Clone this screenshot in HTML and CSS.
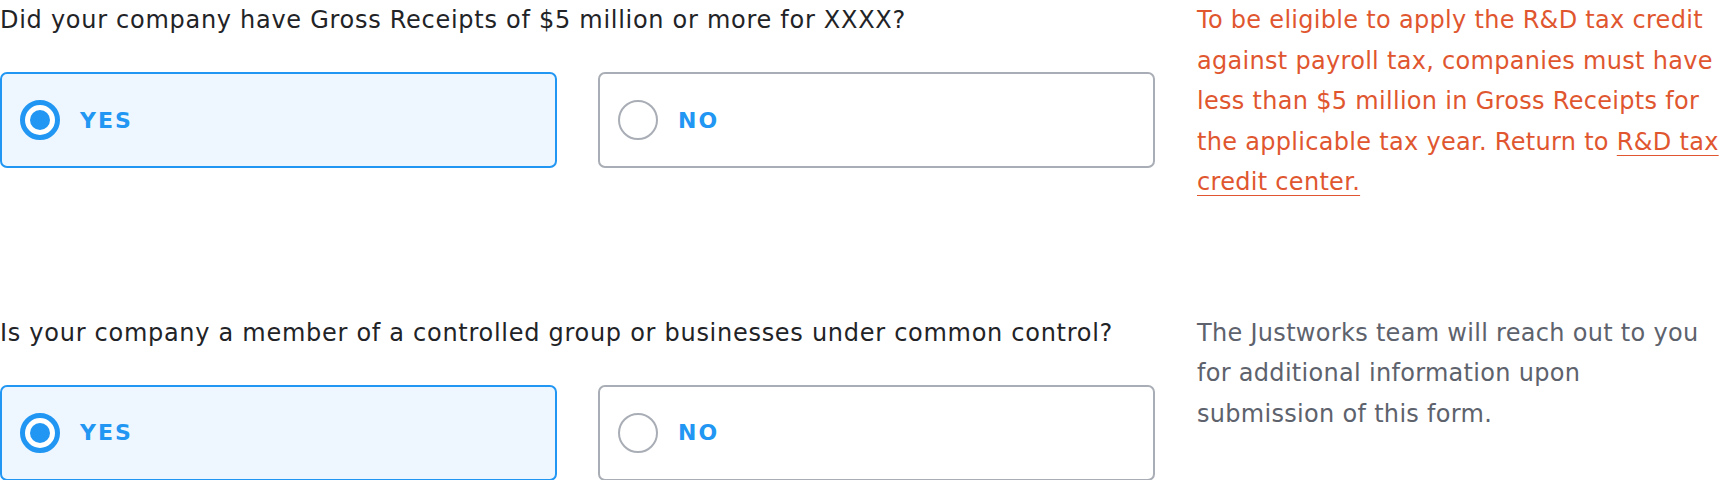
FILE: index.html
```html
<!DOCTYPE html>
<html lang="en">
<head>
<meta charset="utf-8">
<title>Gross Receipts</title>
<link rel="stylesheet" href="styles.css">
</head>
<body>
<div class="page">
  <section class="row">
    <div class="question">
      <p class="label">Did your company have Gross Receipts of $5 million or more for XXXX?</p>
      <div class="options">
        <label class="option selected"><span class="radio"></span><span class="opt-text">Yes</span></label>
        <label class="option"><span class="radio"></span><span class="opt-text">No</span></label>
      </div>
    </div>
    <p class="note warn">To be eligible to apply the R&amp;D tax credit<br>against payroll tax, companies must have<br>less than $5 million in Gross Receipts for<br>the applicable tax year. Return to <a href="#">R&amp;D tax<br>credit center.</a></p>
  </section>
  <section class="row second">
    <div class="question">
      <p class="label">Is your company a member of a controlled group or businesses under common control?</p>
      <div class="options">
        <label class="option selected"><span class="radio"></span><span class="opt-text">Yes</span></label>
        <label class="option"><span class="radio"></span><span class="opt-text">No</span></label>
      </div>
    </div>
    <p class="note info">The Justworks team will reach out to you<br>for additional information upon<br>submission of this form.</p>
  </section>
</div>
</body>
</html>
```

FILE: styles.css
```css
* { box-sizing: border-box; }
html, body { margin: 0; padding: 0; background: #ffffff; }
body {
  font-family: "DejaVu Sans", "Liberation Sans", Arial, sans-serif;
  color: #222326;
}
.page { width: 1720px; }
.row {
  display: grid;
  grid-template-columns: 1155px 523px;
  column-gap: 42px;
  align-items: start;
}
.row.second { margin-top: 110px; }
.label {
  margin: 0;
  font-size: 24px;
  line-height: 40px;
  letter-spacing: 0.72px;
  white-space: nowrap;
}
.options {
  margin-top: 32px;
  display: grid;
  grid-template-columns: 557px 557px;
  column-gap: 41px;
}
.option {
  height: 96px;
  border: 2px solid #a9adb5;
  border-radius: 7px;
  background: #fff;
  display: flex;
  align-items: center;
  padding-left: 18px;
  gap: 20px;
}
.option.selected {
  border-color: #2196f3;
  background: #eef6ff;
}
.radio {
  width: 40px;
  height: 40px;
  flex: none;
  border-radius: 50%;
  border: 2px solid #a9adb5;
  background: #fff;
  display: flex;
  align-items: center;
  justify-content: center;
}
.option.selected .radio {
  border: 5px solid #2196f3;
}
.option.selected .radio::after {
  content: "";
  width: 20px;
  height: 20px;
  border-radius: 50%;
  background: #2196f3;
}
.opt-text {
  color: #2196f3;
  font-weight: 700;
  font-size: 22px;
  letter-spacing: 2px;
  text-transform: uppercase;
}
.note {
  margin: 0;
  font-size: 24px;
  line-height: 40.5px;
  letter-spacing: 0.3px;
  white-space: nowrap;
}
.note.warn { color: #e0562f; }
.note.warn a { color: #e0562f; text-decoration: underline; text-underline-offset: 5px; text-decoration-thickness: 1px; }
.note.info { color: #5d626c; }
```
